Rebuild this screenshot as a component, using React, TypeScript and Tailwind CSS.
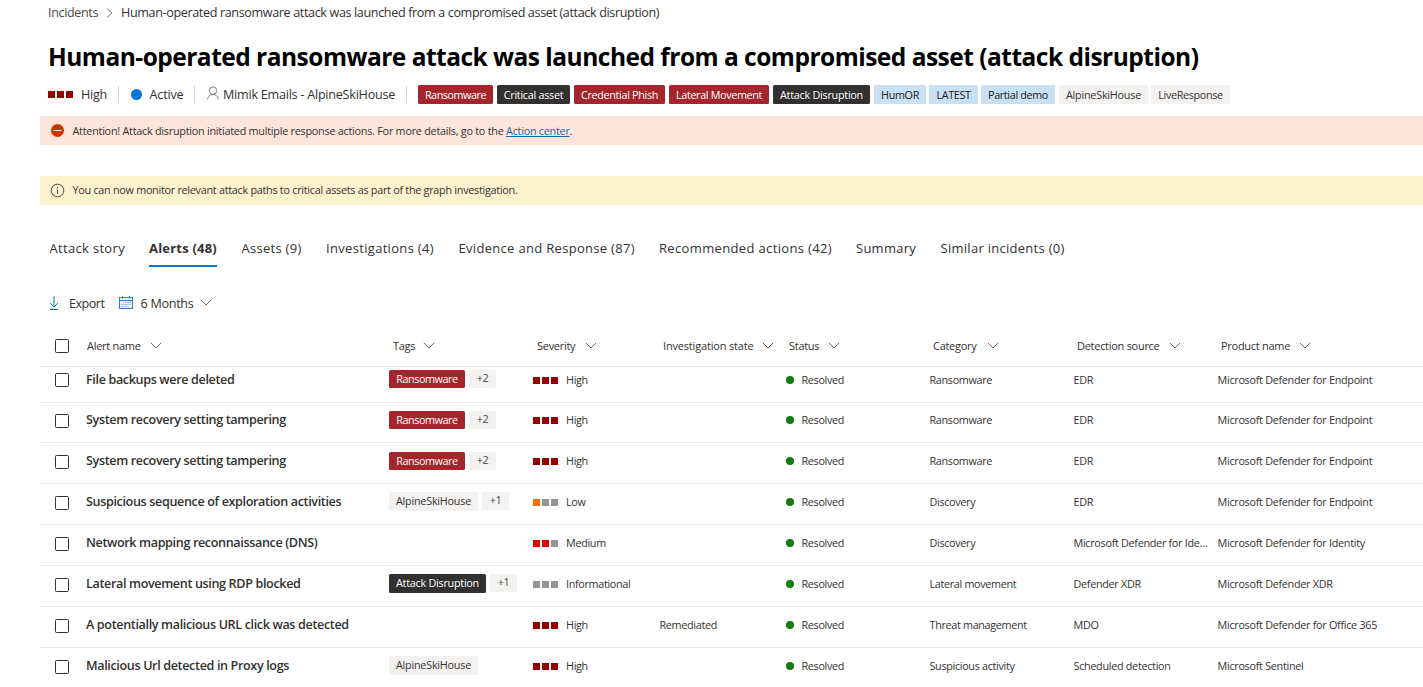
import type { ReactNode } from "react";

type Tone = "red" | "dark" | "blue" | "gray";
type Severity = "High" | "Medium" | "Low" | "Informational";

const toneClass: Record<Tone, string> = {
  red: "bg-[#a4262c] text-white",
  dark: "bg-[#323130] text-white",
  blue: "bg-[#c7e0f4] text-[#1b1a19]",
  gray: "bg-[#f3f2f1] text-[#323130]",
};

const severityColors: Record<Severity, string[]> = {
  High: ["bg-[#960000]", "bg-[#960000]", "bg-[#960000]"],
  Medium: ["bg-[#e00000]", "bg-[#e00000]", "bg-[#979593]"],
  Low: ["bg-[#f27208]", "bg-[#979593]", "bg-[#979593]"],
  Informational: ["bg-[#979593]", "bg-[#979593]", "bg-[#979593]"],
};

const headerTags: { label: string; tone: Tone; width: string }[] = [
  { label: "Ransomware", tone: "red", width: "w-[75px] mr-1 tracking-[-0.46px]" },
  { label: "Critical asset", tone: "dark", width: "w-[73px] mr-1 tracking-[-0.28px]" },
  { label: "Credential Phish", tone: "red", width: "w-[91px] mr-1 tracking-[-0.33px]" },
  { label: "Lateral Movement", tone: "red", width: "w-[100px] mr-1 tracking-[-0.35px]" },
  { label: "Attack Disruption", tone: "dark", width: "w-[97px] mr-1 tracking-[-0.25px]" },
  { label: "HumOR", tone: "blue", width: "w-[52px] mr-[3px] tracking-[-0.33px]" },
  { label: "LATEST", tone: "blue", width: "w-[49px] mr-[3px] tracking-[-0.38px]" },
  { label: "Partial demo", tone: "blue", width: "w-[74px] mr-1 tracking-[-0.35px]" },
  { label: "AlpineSkiHouse", tone: "gray", width: "w-[89px] mr-[3px] tracking-[-0.23px]" },
  { label: "LiveResponse", tone: "gray", width: "w-[79px] tracking-[-0.34px]" },
];

const tabs: { label: string; width: string; active?: boolean }[] = [
  { label: "Attack story", width: "w-[99.5px] tracking-[0.32px]" },
  { label: "Alerts (48)", width: "w-[92.5px] tracking-[0.21px]", active: true },
  { label: "Assets (9)", width: "w-[84.5px] tracking-[0.28px]" },
  { label: "Investigations (4)", width: "w-[132.5px] tracking-[0.32px]" },
  { label: "Evidence and Response (87)", width: "w-[200.5px] tracking-[0.31px]" },
  { label: "Recommended actions (42)", width: "w-[197px] tracking-[0.35px]" },
  { label: "Summary", width: "w-[84.5px] tracking-[0.25px]" },
  { label: "Similar incidents (0)", width: "tracking-[0.28px]" },
];

const columns = [
  { label: "Alert name", width: "w-[54px]", pad: "pl-px" },
  { label: "Tags", width: "w-[21px]", pad: "pl-1" },
  { label: "Severity", width: "w-[39px]", pad: "pl-1" },
  { label: "Investigation state", width: "w-[90px] tracking-[-0.18px]", pad: "pl-1" },
  { label: "Status", width: "w-[30px]", pad: "pl-1" },
  { label: "Category", width: "w-[45px]", pad: "pl-1" },
  { label: "Detection source", width: "w-[83px]", pad: "pl-1" },
  { label: "Product name", width: "w-[69px]", pad: "pl-1" },
];

interface Alert {
  name: string;
  tag?: { label: string; tone: Tone; width: string; more?: string };
  severity: Severity;
  investigation?: string;
  category: string;
  source: string;
  product: string;
}

const ransomTag = { label: "Ransomware", tone: "red" as Tone, width: "w-[76px] h-[18px] pt-px tracking-[-0.44px]", more: "+2" };
const houseWidth = "w-[89px] h-[19px] tracking-[-0.23px]";

const alerts: Alert[] = [
  { name: "File backups were deleted", tag: ransomTag, severity: "High", category: "Ransomware", source: "EDR", product: "Microsoft Defender for Endpoint" },
  { name: "System recovery setting tampering", tag: ransomTag, severity: "High", category: "Ransomware", source: "EDR", product: "Microsoft Defender for Endpoint" },
  { name: "System recovery setting tampering", tag: ransomTag, severity: "High", category: "Ransomware", source: "EDR", product: "Microsoft Defender for Endpoint" },
  { name: "Suspicious sequence of exploration activities", tag: { label: "AlpineSkiHouse", tone: "gray", width: houseWidth, more: "+1" }, severity: "Low", category: "Discovery", source: "EDR", product: "Microsoft Defender for Endpoint" },
  { name: "Network mapping reconnaissance (DNS)", severity: "Medium", category: "Discovery", source: "Microsoft Defender for Identity", product: "Microsoft Defender for Identity" },
  { name: "Lateral movement using RDP blocked", tag: { label: "Attack Disruption", tone: "dark", width: "w-[97px] h-[19px] tracking-[-0.25px]", more: "+1" }, severity: "Informational", category: "Lateral movement", source: "Defender XDR", product: "Microsoft Defender XDR" },
  { name: "A potentially malicious URL click was detected", severity: "High", investigation: "Remediated", category: "Threat management", source: "MDO", product: "Microsoft Defender for Office 365" },
  { name: "Malicious Url detected in Proxy logs", tag: { label: "AlpineSkiHouse", tone: "gray", width: houseWidth }, severity: "High", category: "Suspicious activity", source: "Scheduled detection", product: "Microsoft Sentinel" },
];

const rowHeights = ["h-9", "h-10", "h-[41px]", "h-[41px]", "h-[41px]", "h-[41px]", "h-[41px]", "h-[41px]"];

const gridCols = "grid grid-cols-[46px_303px_144px_126px_126px_144px_144px_144px_1fr]";

function Chevron() {
  return (
    <svg className="h-[7px] w-[12px] shrink-0" viewBox="0 0 12 7" fill="none" stroke="#605e5c" strokeWidth="0.9">
      <path d="M0.8 0.8 L6 6 L11.2 0.8" />
    </svg>
  );
}

function SeverityBar({ level }: { level: Severity }) {
  return (
    <div className="flex shrink-0 gap-[2px]">
      {severityColors[level].map((color, i) => (
        <span key={i} className={`size-[7px] ${color}`} />
      ))}
    </div>
  );
}

function Divider() {
  return <span className="h-[17px] w-px bg-[#d6d4d2]" />;
}

function Checkbox() {
  return <span className="block size-[14px] rounded-[1.5px] border border-[#323130] bg-white" />;
}

function Banner({ className, icon, children }: { className: string; icon: ReactNode; children: ReactNode }) {
  return (
    <div className={`ml-10 flex h-[29px] items-center pl-[11px] text-[10.8px] text-[#323130] ${className}`}>
      {icon}
      <div className="ml-[8.5px] whitespace-nowrap">{children}</div>
    </div>
  );
}

export default function App() {
  return (
    <div className="h-[687px] w-full overflow-hidden bg-white font-['Open_Sans','Noto_Sans',sans-serif] text-[#323130]">
      <nav className="flex h-[26px] items-center whitespace-nowrap pl-12 text-[12.6px]">
        <span className="w-[50px] tracking-[-0.38px] text-[#4a4846]">Incidents</span>
        <svg className="mx-2 h-[10px] w-[7px]" viewBox="0 0 7 10" fill="none" stroke="#605e5c" strokeWidth="0.9">
          <path d="M1 0.6 L5.8 5 L1 9.4" />
        </svg>
        <span className="tracking-[-0.37px]">
          Human-operated ransomware attack was launched from a compromised asset (attack disruption)
        </span>
      </nav>

      <h1 className="mt-[15px] flex h-8 items-center whitespace-nowrap pl-[48px] text-[24.5px] font-bold tracking-[-0.51px] text-black">
        Human-operated ransomware attack was launched from a compromised asset (attack disruption)
      </h1>

      <div className="mt-3 flex h-[19px] items-center whitespace-nowrap pl-12 text-[12.6px]">
        <SeverityBar level="High" />
        <span className="ml-2 w-[37px] pt-0.5 tracking-[-0.26px]">High</span>
        <Divider />
        <span className="ml-3 size-[11px] rounded-full bg-[#0078d4]" />
        <span className="ml-[7.5px] w-[44.5px] pt-0.5 tracking-[-0.17px]">Active</span>
        <Divider />
        <svg className="mb-[3px] ml-3 h-[14px] w-[12px]" viewBox="0 0 12 14" fill="none" stroke="#797775" strokeWidth="0.9">
          <circle cx="6" cy="4.6" r="3.7" />
          <path d="M0.6 13.4 C0.9 10.3 3.1 8.4 6 8.4 C8.9 8.4 11.1 10.3 11.4 13.4" />
        </svg>
        <span className="ml-[4px] w-[183px] pt-0.5 tracking-[-0.24px]">Mimik Emails - AlpineSkiHouse</span>
        <Divider />
        <div className="ml-[11px] flex">
          {headerTags.map((t) => (
            <span key={t.label} className={`flex h-[19px] items-center justify-center rounded-[1.5px] pt-px text-[10.8px] ${toneClass[t.tone]} ${t.width}`}>
              {t.label}
            </span>
          ))}
        </div>
      </div>

      <Banner
        className="mt-3 bg-[#fee5dc]"
        icon={
          <svg className="size-[13px]" viewBox="0 0 13 13">
            <circle cx="6.5" cy="6.5" r="6.5" fill="#c83600" />
            <path d="M2.5 6.5 H10.5" stroke="#fff" strokeWidth="1" />
          </svg>
        }
      >
        <div className="pt-0.5">
          <span className="tracking-[-0.237px]">
            Attention! Attack disruption initiated multiple response actions. For more details, go to the{" "}
          </span>
          <a className="tracking-[-0.245px] text-[#0f6ca8] underline underline-offset-1">Action center</a>.
        </div>
      </Banner>

      <Banner
        className="mt-[31px] bg-[#fff2cf]"
        icon={
          <svg className="-ml-px -mr-px size-[15px]" viewBox="0 0 15 15" fill="none" stroke="#4a4846" strokeWidth="1">
            <circle cx="7.5" cy="7.5" r="6.3" />
            <path d="M7.5 6.5 V10.8 M7.5 4.2 V5.4" />
          </svg>
        }
      >
        <span className="tracking-[-0.266px]">
          You can now monitor relevant attack paths to critical assets as part of the graph investigation.
        </span>
      </Banner>

      <div className="mt-[29px] flex h-[33px] whitespace-nowrap pl-[49.5px] text-[13px]">
        {tabs.map((t) => (
          <div key={t.label} className={t.width}>
            <span className={`inline-flex h-[33px] pt-[5px] ${t.active ? "border-b-2 border-[#0f75c6] font-bold" : ""}`}>{t.label}</span>
          </div>
        ))}
      </div>

      <div className="mt-[26px] flex h-5 items-center whitespace-nowrap pl-[49px] text-[12.6px]">
        <svg className="h-[14px] w-[10px]" viewBox="0 0 10 14" fill="none" stroke="#0f6cbd" strokeWidth="1">
          <path d="M5 0 V11 M1.2 7 L5 11 L8.8 7 M1 13.5 H9" />
        </svg>
        <span className="ml-[10px] w-[36px] pt-0.5 tracking-[-0.5px]">Export</span>
        <svg className="mb-px ml-[14px] h-[13px] w-[14px]" viewBox="0 0 14 13" fill="none" stroke="#2b7cc4">
          <rect x="0.5" y="1.5" width="13" height="11" fill="#eef6fc" />
          <path d="M0.5 4.5 H13.5 M3.5 0 V2.5 M10.5 0 V2.5" />
          <path d="M4.5 6.5 H12 M2.5 8.5 H12 M2.5 10.5 H10" strokeDasharray="1 1" opacity="0.75" />
        </svg>
        <span className="ml-[7.5px] w-[53.5px] pt-0.5 tracking-[-0.29px]">6 Months</span>
        <span className="mb-0.5 ml-[6px]">
          <Chevron />
        </span>
      </div>

      <div className={`ml-10 mt-[13px] h-[41px] items-center whitespace-nowrap border-b border-[#e1dfdd] text-[11px] font-medium tracking-[-0.28px] ${gridCols}`}>
        <div className="pl-[15px]">
          <Checkbox />
        </div>
        {columns.map((c) => (
          <div key={c.label} className={`flex items-center ${c.pad}`}>
            <span className={c.width}>{c.label}</span>
            <span className="mb-0.5 ml-[9px]">
              <Chevron />
            </span>
          </div>
        ))}
      </div>

      {alerts.map((a, i) => (
        <div key={i} className={`ml-10 flex items-end border-b border-[#edebe9] pb-[9px] ${rowHeights[i]}`}>
          <div className={`h-[26px] w-full items-center whitespace-nowrap text-[10.8px] tracking-[-0.32px] ${gridCols}`}>
            <div className={`pl-[15px] ${i === 0 ? "" : "pt-[2px]"}`}>
              <Checkbox />
            </div>
            <div className="pt-px text-[12.6px] font-semibold tracking-[-0.365px]">{a.name}</div>
            <div className={`flex ${i === 0 ? "pb-0.5" : i > 2 ? "pb-px" : ""}`}>
              {a.tag && (
                <>
                  <span className={`flex items-center justify-center rounded-[1.5px] ${toneClass[a.tag.tone]} ${a.tag.width}`}>{a.tag.label}</span>
                  {a.tag.more && (
                    <span className="ml-1 flex h-[18px] w-[27px] items-center justify-center rounded-[1.5px] bg-[#f3f2f1] pb-px text-[#484644]">{a.tag.more}</span>
                  )}
                </>
              )}
            </div>
            <div className="flex items-center">
              <SeverityBar level={a.severity} />
              <span className="ml-2">{a.severity}</span>
            </div>
            <div className="pl-[0.5px]">{a.investigation}</div>
            <div className="flex items-center pl-px">
              <span className="size-[8px] rounded-full bg-[#107c10]" />
              <span className="ml-[7.5px]">Resolved</span>
            </div>
            <div className="pl-[0.5px]">{a.category}</div>
            <div className="w-[136px] overflow-hidden text-ellipsis pl-[0.5px] tracking-[-0.29px]">{a.source}</div>
            <div className="pl-[0.5px] tracking-[-0.28px]">{a.product}</div>
          </div>
        </div>
      ))}
    </div>
  );
}
